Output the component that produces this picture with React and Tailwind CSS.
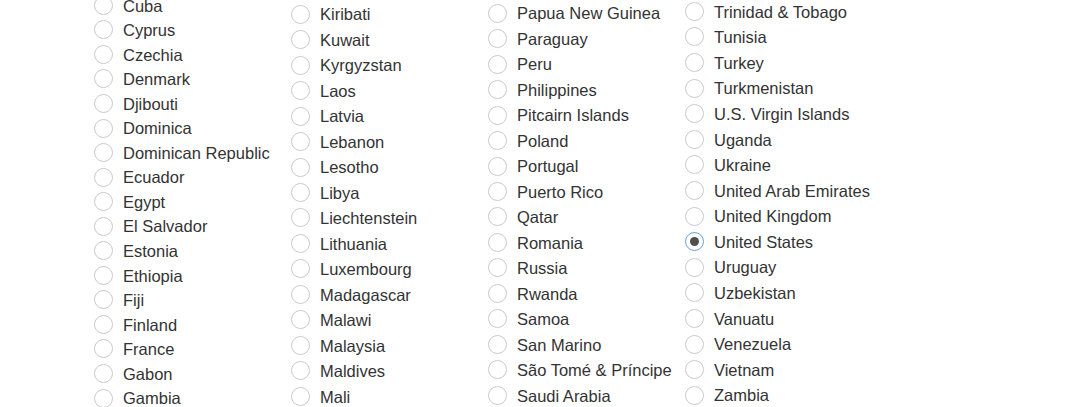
import { useState } from 'react';

const columns = [
  {
    top: 'mt-[-7px]',
    row: 'h-[24.56px]',
    items: ['Cuba', 'Cyprus', 'Czechia', 'Denmark', 'Djibouti', 'Dominica', 'Dominican Republic', 'Ecuador', 'Egypt', 'El Salvador', 'Estonia', 'Ethiopia', 'Fiji', 'Finland', 'France', 'Gabon', 'Gambia'],
  },
  {
    top: 'mt-[1.5px]',
    row: 'h-[25.47px]',
    items: ['Kiribati', 'Kuwait', 'Kyrgyzstan', 'Laos', 'Latvia', 'Lebanon', 'Lesotho', 'Libya', 'Liechtenstein', 'Lithuania', 'Luxembourg', 'Madagascar', 'Malawi', 'Malaysia', 'Maldives', 'Mali'],
  },
  {
    top: 'mt-[0.5px]',
    row: 'h-[25.47px]',
    items: ['Papua New Guinea', 'Paraguay', 'Peru', 'Philippines', 'Pitcairn Islands', 'Poland', 'Portugal', 'Puerto Rico', 'Qatar', 'Romania', 'Russia', 'Rwanda', 'Samoa', 'San Marino', 'São Tomé & Príncipe', 'Saudi Arabia'],
  },
  {
    top: 'mt-[-1.5px]',
    row: 'h-[25.6px]',
    items: ['Trinidad & Tobago', 'Tunisia', 'Turkey', 'Turkmenistan', 'U.S. Virgin Islands', 'Uganda', 'Ukraine', 'United Arab Emirates', 'United Kingdom', 'United States', 'Uruguay', 'Uzbekistan', 'Vanuatu', 'Venezuela', 'Vietnam', 'Zambia'],
  },
];

function Radio({ checked }) {
  return (
    <span
      className={
        checked
          ? 'flex h-[19px] w-[19px] shrink-0 items-center justify-center rounded-full border-[1.5px] border-[#6a9fd4] bg-white'
          : 'flex h-[19px] w-[19px] shrink-0 items-center justify-center rounded-full border-[1.5px] border-[#cacaca] bg-white'
      }
    >
      {checked && <span className="h-[9px] w-[9px] rounded-full bg-[#4f4f4f]" />}
    </span>
  );
}

export default function App() {
  const [country, setCountry] = useState('United States');

  return (
    <div className="h-[407px] w-[1080px] overflow-hidden bg-white pl-[94px] font-['Liberation_Sans',Arial,sans-serif] text-[#333333]">
      <div className="flex items-start">
        {columns.map((col, i) => (
          <div key={i} className={`flex w-[197px] flex-col ${col.top}`}>
            {col.items.map((name) => (
              <label
                key={name}
                onClick={() => setCountry(name)}
                className={`flex cursor-pointer items-center gap-[10px] whitespace-nowrap text-[16.5px] leading-none ${col.row}`}
              >
                <Radio checked={country === name} />
                <span className="pt-[1px]">{name}</span>
              </label>
            ))}
          </div>
        ))}
      </div>
    </div>
  );
}
